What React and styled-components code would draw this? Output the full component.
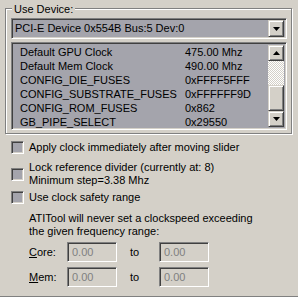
import React from "react";
import styled, { createGlobalStyle, css } from "styled-components";

const Global = createGlobalStyle`
  html, body { margin: 0; padding: 0; background: #d4d0c8; }
  body { font-family: "Liberation Sans", Arial, sans-serif; font-size: 11px; color: #000; }
  * { box-sizing: border-box; }
`;

const raised = css`
  border: 1px solid;
  border-color: #d4d0c8 #404040 #404040 #d4d0c8;
  box-shadow: inset 1px 1px 0 #fff, inset -1px -1px 0 #808080;
  background: #d4d0c8;
`;

const sunken = css`
  border: 1px solid;
  border-color: #808080 #fff #fff #808080;
  box-shadow: inset 1px 1px 0 #404040, inset -1px -1px 0 #d4d0c8;
`;

const Page = styled.div`
  width: 298px;
  height: 297px;
  padding: 8px 0 0 5px;
  border-bottom: 1px solid #808080;
  background: #d4d0c8;
  overflow: hidden;
`;

const GroupBox = styled.div`
  position: relative;
  width: 287px;
  height: 126px;
  border: 1px solid #808080;
  box-shadow: inset 1px 1px 0 #fff, 1px 1px 0 #fff;
  padding: 9px 0 0 5px;
  display: flex;
  flex-direction: column;
  gap: 3px;
`;

const Legend = styled.span`
  position: absolute;
  top: -6px;
  left: 6px;
  padding: 0 2px;
  line-height: 13px;
  background: #d4d0c8;
`;

const Combo = styled.div`
  ${sunken};
  width: 276px;
  height: 21px;
  background: #a4a4ac;
  display: flex;
  align-items: center;
  padding: 2px 2px 2px 3px;
  line-height: 13px;
`;

const ComboText = styled.span`
  flex: 1;
`;

const ArrowButton = styled.div`
  ${raised};
  width: 16px;
  height: ${(p) => p.$h || 16}px;
  display: flex;
  align-items: center;
  justify-content: center;
  flex: none;
`;

const Arrow = ({ up }) => (
  <svg width="7" height="4" viewBox="0 0 7 4" style={{ display: "block" }}>
    {up ? <polygon points="3.5,0 7,4 0,4" fill="#000" /> : <polygon points="0,0 7,0 3.5,4" fill="#000" />}
  </svg>
);

const List = styled.div`
  ${sunken};
  width: 276px;
  height: 88px;
  background: #a4a4ac;
  padding: 2px;
  display: flex;
`;

const Rows = styled.div`
  flex: 1;
  padding-left: 6px;
`;

const Row = styled.div`
  display: grid;
  grid-template-columns: 165px 1fr;
  height: 14px;
  line-height: 14px;
  white-space: nowrap;
`;

const ScrollBar = styled.div`
  width: 16px;
  display: flex;
  flex-direction: column;
`;

const Track = styled.div`
  flex: 1;
  display: flex;
  flex-direction: column;
  justify-content: flex-end;
  background-color: #fff;
  background-image: repeating-conic-gradient(#d4d0c8 0 25%, #fff 0 50%);
  background-size: 2px 2px;
`;

const Thumb = styled.div`
  ${raised};
  height: 26px;
`;

const Options = styled.div`
  padding: 7px 0 0 6px;
  display: flex;
  flex-direction: column;
`;

const CheckRow = styled.div`
  display: flex;
  align-items: center;
  gap: 5px;
  margin-top: ${(p) => p.$mt || 0}px;
  line-height: 13px;
  white-space: nowrap;
`;

const Box = styled.div`
  ${sunken};
  width: 13px;
  height: 13px;
  background: #a4a4ac;
  flex: none;
`;

const Indented = styled.div`
  padding-left: 18px;
  margin-top: ${(p) => p.$mt || 0}px;
`;

const Info = styled.div`
  line-height: 13px;
  white-space: nowrap;
`;

const RangeRow = styled.div`
  display: grid;
  grid-template-columns: 38px 50px 42px 50px;
  align-items: center;
  margin-top: ${(p) => p.$mt || 0}px;
  line-height: 13px;
`;

const To = styled.span`
  padding-left: 13px;
`;

const Edit = styled.div`
  ${sunken};
  width: 50px;
  height: 20px;
  background: #d4d0c8;
  color: #808080;
  padding: 3px 0 0 4px;
  line-height: 13px;
`;

const rows = [
  ["Default GPU Clock", "475.00 Mhz"],
  ["Default Mem Clock", "490.00 Mhz"],
  ["CONFIG_DIE_FUSES", "0xFFFF5FFF"],
  ["CONFIG_SUBSTRATE_FUSES", "0xFFFFFF9D"],
  ["CONFIG_ROM_FUSES", "0x862"],
  ["GB_PIPE_SELECT", "0x29550"],
];

export default function App() {
  return (
    <>
      <Global />
      <Page>
        <GroupBox>
          <Legend>Use Device:</Legend>
          <Combo>
            <ComboText>PCI-E Device 0x554B Bus:5 Dev:0</ComboText>
            <ArrowButton $h={17}>
              <Arrow />
            </ArrowButton>
          </Combo>
          <List>
            <Rows>
              {rows.map(([k, v]) => (
                <Row key={k}>
                  <span>{k}</span>
                  <span>{v}</span>
                </Row>
              ))}
            </Rows>
            <ScrollBar>
              <ArrowButton>
                <Arrow up />
              </ArrowButton>
              <Track>
                <Thumb />
              </Track>
              <ArrowButton>
                <Arrow />
              </ArrowButton>
            </ScrollBar>
          </List>
        </GroupBox>
        <Options>
          <CheckRow>
            <Box />
            <span>Apply clock immediately after moving slider</span>
          </CheckRow>
          <CheckRow $mt={7}>
            <Box />
            <span>
              Lock reference divider (currently at: 8)
              <br />
              Minimum step=3.38 Mhz
            </span>
          </CheckRow>
          <CheckRow $mt={4}>
            <Box />
            <span>Use clock safety range</span>
          </CheckRow>
          <Indented $mt={8}>
            <Info>
              ATITool will never set a clockspeed exceeding
              <br />
              the given frequency range:
            </Info>
            <RangeRow $mt={4}>
              <span>
                <u>C</u>ore:
              </span>
              <Edit>0.00</Edit>
              <To>to</To>
              <Edit>0.00</Edit>
            </RangeRow>
            <RangeRow $mt={5}>
              <span>
                <u>M</u>em:
              </span>
              <Edit>0.00</Edit>
              <To>to</To>
              <Edit>0.00</Edit>
            </RangeRow>
          </Indented>
        </Options>
      </Page>
    </>
  );
}
